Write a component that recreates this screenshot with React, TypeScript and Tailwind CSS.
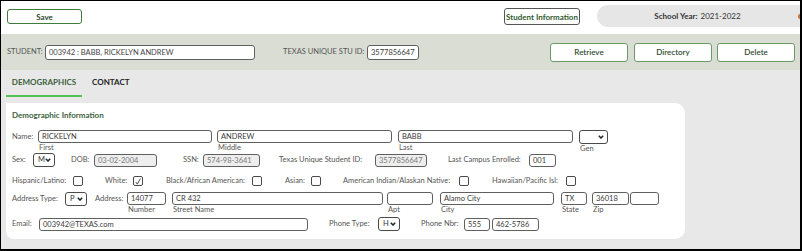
import { ReactNode } from "react";

function Btn({ children, className = "" }: { children: ReactNode; className?: string }) {
    return (
        <div
            className={
                "flex shrink-0 items-center justify-center whitespace-nowrap rounded-[3px] border bg-white text-[8px] font-bold text-[#2f4a2f] " +
                className
            }
        >
            {children}
        </div>
    );
}

function Field({ value = "", w, disabled = false, className = "" }: { value?: string; w: string; disabled?: boolean; className?: string }) {
    return (
        <div
            className={
                "h-[13px] shrink-0 overflow-hidden whitespace-nowrap rounded-[3px] border border-[#5f5f5f] pl-[3px] text-[7.5px] leading-[11px] " +
                (disabled ? "bg-[#eeeeee] text-[#7a7a7a] " : "bg-white text-[#3a3a3a] ") +
                w +
                " " +
                className
            }
        >
            {value}
        </div>
    );
}

function Sel({ value = "", w, className = "" }: { value?: string; w: string; className?: string }) {
    return (
        <div
            className={
                "flex h-[14px] shrink-0 items-center justify-between rounded-[3px] border border-[#4a4a4a] bg-white pl-[4px] pr-[3px] text-[7.5px] text-[#333] " +
                w +
                " " +
                className
            }
        >
            <span>{value}</span>
            <svg width="6" height="4" viewBox="0 0 6 4">
                <path d="M0.8 0.8l2.2 2.2L5.2 0.8" stroke="#222" strokeWidth="1.5" fill="none" />
            </svg>
        </div>
    );
}

function Check({ checked = false, className = "" }: { checked?: boolean; className?: string }) {
    return (
        <div className={"flex h-[10px] w-[10px] shrink-0 items-center justify-center rounded-[2px] border border-[#4a4a4a] bg-white " + className}>
            {checked && (
                <svg width="6" height="7" viewBox="0 0 6 7">
                    <path d="M0.8 4l1.5 2.2L5.3 0.6" stroke="#3a3a3a" strokeWidth="0.9" fill="none" />
                </svg>
            )}
        </div>
    );
}

function Lbl({ children, className = "" }: { children: ReactNode; className?: string }) {
    return <span className={"shrink-0 whitespace-nowrap text-[7.5px] leading-[10px] text-[#555] " + className}>{children}</span>;
}

function Under({ children }: { children: ReactNode }) {
    return <span className="whitespace-nowrap pl-[1px] text-[7.5px] leading-[9px] text-[#555]">{children}</span>;
}

export default function App() {
    return (
        <div
            className="flex h-[251px] w-[802px] flex-col overflow-hidden border-t border-l border-r-2 border-b-2 border-black bg-[#e8e8e8]"
            style={{ fontFamily: "Lato, sans-serif" }}
        >
            {/* top bar */}
            <div className="flex h-[33px] shrink-0 items-start bg-white">
                <Btn className="ml-[6px] mt-[8px] h-[15px] w-[75px] border-[#3f7a3f] text-[#2f4a2f]">Save</Btn>
                <Btn className="ml-[422px] mt-[7px] h-[17px] w-[76px] border-[#555] text-[#2f5a2f]">Student Information</Btn>
                <div className="ml-[17px] mt-[4px] flex h-[22px] flex-1 items-center rounded-l-[11px] bg-[#e6e6e6] text-[8px] text-[#333]">
                    <div className="flex flex-1 justify-center">
                        <span className="font-bold">School Year:</span>
                        <span className="ml-[3px]">2021-2022</span>
                    </div>
                    <div className="h-[5px] w-[2px] rounded-l-full bg-[#c8783a]" />
                </div>
            </div>

            {/* student band */}
            <div className="flex h-[36px] shrink-0 items-center bg-[#d9ddd3] pl-[6px]">
                <Lbl className="w-[38px] text-[#444]">STUDENT:</Lbl>
                <Field value="003942 : BABB, RICKELYN ANDREW" w="w-[210px]" className="h-[15px] leading-[13px] text-[#444]" />
                <Lbl className="ml-[28px] w-[84px] text-[#444]">TEXAS UNIQUE STU ID:</Lbl>
                <Field value="3577856647" w="w-[52px]" className="h-[15px] leading-[13px]" />
                <Btn className="ml-[131px] h-[19px] w-[78px] border-[#6a9a6a] font-semibold">Retrieve</Btn>
                <Btn className="ml-[6px] h-[19px] w-[78px] border-[#6a9a6a] font-semibold">Directory</Btn>
                <Btn className="ml-[5px] h-[19px] w-[78px] border-[#6a9a6a] font-semibold">Delete</Btn>
            </div>

            {/* tabs */}
            <div className="flex h-[27px] shrink-0 items-end pl-[5px]">
                <div className="flex w-[76px] justify-center border-b-2 border-[#52c052] pb-[7px] text-[8px] font-bold text-[#3b5e3b]">
                    DEMOGRAPHICS
                </div>
                <div className="ml-[10px] pb-[9px] text-[8px] font-bold text-[#222]">CONTACT</div>
            </div>

            {/* card */}
            <div className="ml-[5px] mt-[6px] h-[136px] w-[679px] rounded-r-[10px] rounded-bl-[8px] bg-white pl-[6px] pt-[6px]">
                <div className="text-[8px] font-bold leading-[12px] text-[#3c5f3c]">Demographic Information</div>

                {/* name */}
                <div className="mt-[9px] flex items-start">
                    <Lbl className="w-[26px] leading-[13px]">Name:</Lbl>
                    <div className="flex flex-col">
                        <Field value="RICKELYN" w="w-[174px]" />
                        <Under>First</Under>
                    </div>
                    <div className="ml-[5px] flex flex-col">
                        <Field value="ANDREW" w="w-[175px]" />
                        <Under>Middle</Under>
                    </div>
                    <div className="ml-[6px] flex flex-col">
                        <Field value="BABB" w="w-[175px]" />
                        <Under>Last</Under>
                    </div>
                    <div className="ml-[6px] flex flex-col">
                        <Sel w="w-[29px]" />
                        <Under>Gen</Under>
                    </div>
                </div>

                {/* sex / dob */}
                <div className="flex items-center">
                    <Lbl className="w-[21px]">Sex:</Lbl>
                    <Sel value="M" w="w-[22px]" />
                    <Lbl className="ml-[16px] w-[23px]">DOB:</Lbl>
                    <Field value="03-02-2004" w="w-[63px]" disabled />
                    <Lbl className="ml-[26px] w-[20px]">SSN:</Lbl>
                    <Field value="574-98-3641" w="w-[57px]" disabled />
                    <Lbl className="ml-[19px] w-[96px]">Texas Unique Student ID:</Lbl>
                    <Field value="3577856647" w="w-[52px]" disabled />
                    <Lbl className="ml-[21px] w-[81px] text-[#5b3f6e]">Last Campus Enrolled:</Lbl>
                    <Field value="001" w="w-[27px]" />
                </div>

                {/* ethnicity */}
                <div className="mt-[9px] flex items-center">
                    <Lbl className="w-[61px]">Hispanic/Latino:</Lbl>
                    <Check />
                    <Lbl className="ml-[22px] w-[28px]">White:</Lbl>
                    <Check checked />
                    <Lbl className="ml-[23px] w-[86px]">Black/African American:</Lbl>
                    <Check />
                    <Lbl className="ml-[23px] w-[26px]">Asian:</Lbl>
                    <Check />
                    <Lbl className="ml-[22px] w-[116px]">American Indian/Alaskan Native:</Lbl>
                    <Check />
                    <Lbl className="ml-[23px] w-[74px]">Hawaiian/Pacific Isl:</Lbl>
                    <Check />
                </div>

                {/* address */}
                <div className="mt-[6px] flex items-start">
                    <Lbl className="w-[53px] leading-[13px]">Address Type:</Lbl>
                    <Sel value="P" w="w-[22px]" />
                    <Lbl className="ml-[8px] w-[32px] leading-[13px]">Address:</Lbl>
                    <div className="flex flex-col">
                        <Field value="14077" w="w-[39px]" />
                        <Under>Number</Under>
                    </div>
                    <div className="ml-[6px] flex flex-col">
                        <Field value="CR 432" w="w-[211px]" />
                        <Under>Street Name</Under>
                    </div>
                    <div className="ml-[4px] flex flex-col">
                        <Field w="w-[46px]" />
                        <Under>Apt</Under>
                    </div>
                    <div className="ml-[7px] flex flex-col">
                        <Field value="Alamo City" w="w-[114px]" />
                        <Under>City</Under>
                    </div>
                    <div className="ml-[7px] flex flex-col">
                        <Field value="TX" w="w-[26px]" />
                        <Under>State</Under>
                    </div>
                    <div className="ml-[5px] flex flex-col">
                        <Field value="36018" w="w-[37px]" />
                        <Under>Zip</Under>
                    </div>
                    <Field w="w-[29px]" className="ml-[1px]" />
                </div>

                {/* email / phone */}
                <div className="mt-[3px] flex items-center">
                    <Lbl className="w-[27px]">Email:</Lbl>
                    <Field value="003942@TEXAS.com" w="w-[269px]" />
                    <Lbl className="ml-[21px] w-[49px]">Phone Type:</Lbl>
                    <Sel value="H" w="w-[22px]" />
                    <Lbl className="ml-[21px] w-[43px]">Phone Nbr:</Lbl>
                    <Field value="555" w="w-[26px]" />
                    <Field value="462-5786" w="w-[47px]" className="ml-[2px]" />
                </div>
            </div>
        </div>
    );
}
